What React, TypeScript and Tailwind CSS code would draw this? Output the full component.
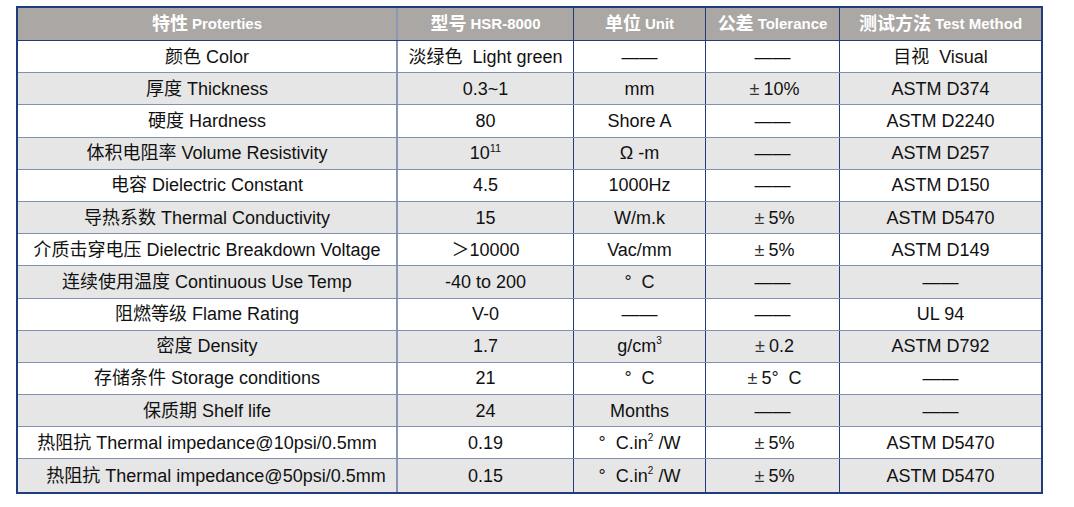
const pm = <span className="inline-block w-[18px] text-center text-[#333]">±</span>;

const rows: [React.ReactNode, React.ReactNode, React.ReactNode, React.ReactNode, React.ReactNode][] = [
  ['颜色 Color', '淡绿色  Light green', '——', '——', '目视  Visual'],
  ['厚度 Thickness', '0.3~1', 'mm', <>{pm}10%</>, 'ASTM D374'],
  ['硬度 Hardness', '80', 'Shore A', '——', 'ASTM D2240'],
  [
    '体积电阻率 Volume Resistivity',
    <>
      10<sup className="text-[11px]">11</sup>
    </>,
    'Ω -m',
    '——',
    'ASTM D257',
  ],
  ['电容 Dielectric Constant', '4.5', '1000Hz', '——', 'ASTM D150'],
  ['导热系数 Thermal Conductivity', '15', 'W/m.k', <>{pm}5%</>, 'ASTM D5470'],
  ['介质击穿电压 Dielectric Breakdown Voltage', '＞10000', 'Vac/mm', <>{pm}5%</>, 'ASTM D149'],
  ['连续使用温度 Continuous Use Temp', '-40 to 200', '°  C', '——', '——'],
  ['阻燃等级 Flame Rating', 'V-0', '——', '——', 'UL 94'],
  [
    '密度 Density',
    '1.7',
    <>
      g/cm<sup className="text-[10px]">3</sup>
    </>,
    <>{pm}0.2</>,
    'ASTM D792',
  ],
  ['存储条件 Storage conditions', '21', '°  C', <>{pm}5°  C</>, '——'],
  ['保质期 Shelf life', '24', 'Months', '——', '——'],
  [
    '热阻抗 Thermal impedance@10psi/0.5mm',
    '0.19',
    <>
      °  C.in<sup className="text-[10px]">2</sup> /W
    </>,
    <>{pm}5%</>,
    'ASTM D5470',
  ],
  [
    <span className="pl-[18px]">热阻抗 Thermal impedance@50psi/0.5mm</span>,
    '0.15',
    <>
      °  C.in<sup className="text-[10px]">2</sup> /W
    </>,
    <>{pm}5%</>,
    'ASTM D5470',
  ],
];

const headers = [
  ['特性', 'Proterties'],
  ['型号', 'HSR-8000'],
  ['单位', 'Unit'],
  ['公差', 'Tolerance'],
  ['测试方法', 'Test Method'],
];

// column widths, matched to the dividers in the picture
const cols = ['w-[380px]', 'w-[176px]', 'w-[132px]', 'w-[134px]', 'w-[201px]'];
const divider = [
  'border-r-2 border-r-[#8a97b6]',
  'border-r border-r-[#1f3d7a]',
  'border-r border-r-[#1f3d7a]',
  'border-r border-r-[#1f3d7a]',
  '',
];

export default function App() {
  return (
    <div className="w-[1074px] h-[507px] bg-white pt-[6px] pl-[16px] font-['Liberation_Sans','Noto_Sans_CJK_SC',sans-serif]">
      <div className="w-[1027px] border-2 border-[#1f3d7a]">
        {/* Header */}
        <div className="flex h-[33px] bg-[#aba7a5] border-b border-[#1f3d7a]">
          {headers.map(([zh, en], i) => (
            <div
              key={i}
              className={`${cols[i]} ${divider[i]} shrink-0 flex items-center justify-center text-white font-bold`}
            >
              <span className="text-[18px]">{zh}</span>
              <span className="text-[15px] ml-[4px]">{en}</span>
            </div>
          ))}
        </div>

        {/* Rows */}
        {rows.map((row, r) => (
          <div
            key={r}
            className={`flex h-[32.2px] ${r % 2 === 0 ? 'bg-white' : 'bg-[#e6e6e6]'} ${
              r < rows.length - 1 ? 'border-b border-[#8290b2]' : ''
            }`}
          >
            {row.map((cell, i) => (
              <div
                key={i}
                className={`${cols[i]} ${divider[i]} shrink-0 flex items-center justify-center text-[18px] leading-none text-[#111] whitespace-pre`}
              >
                {cell}
              </div>
            ))}
          </div>
        ))}
      </div>
    </div>
  );
}
